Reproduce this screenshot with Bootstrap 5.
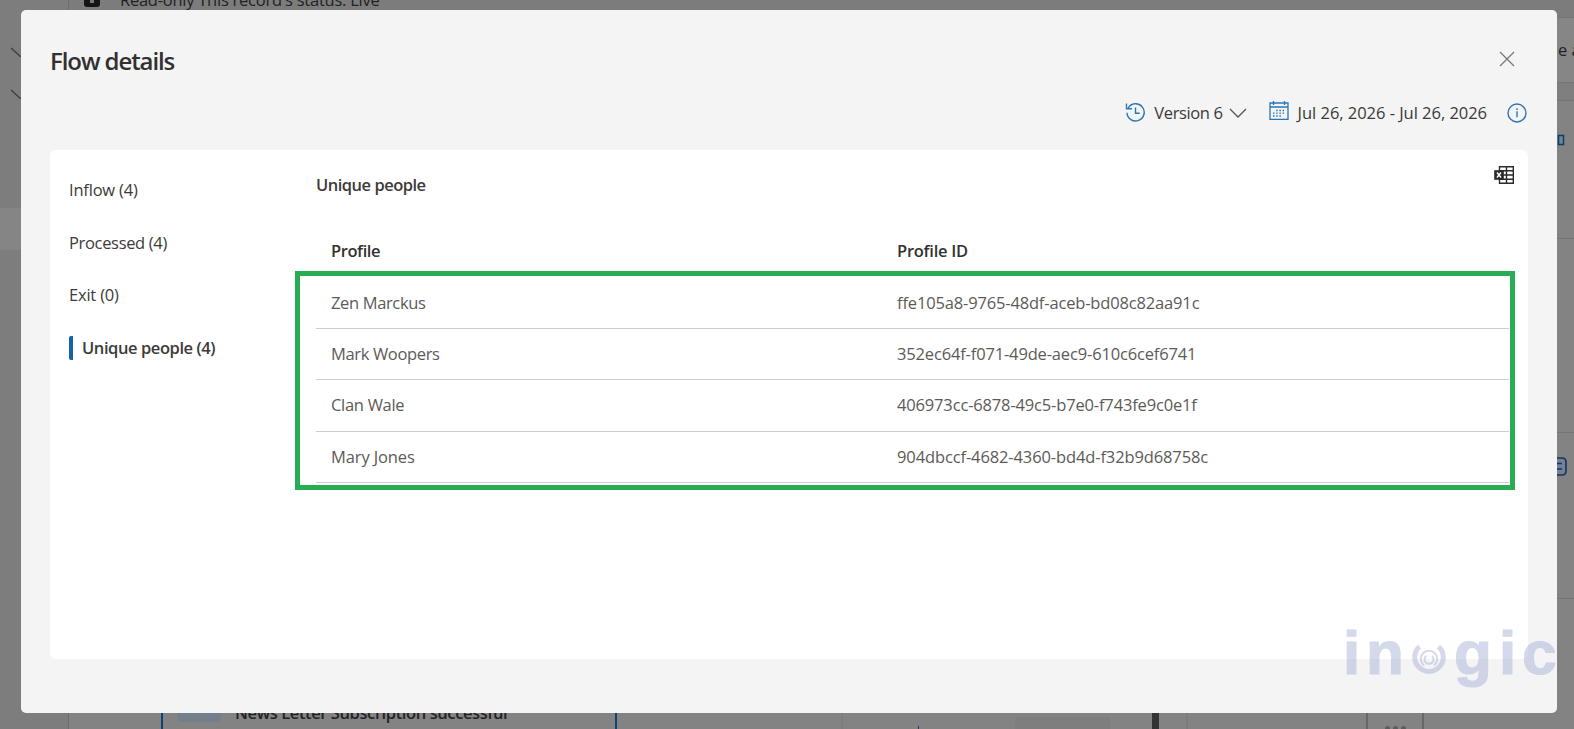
<!DOCTYPE html>
<html lang="en">
<head>
<meta charset="utf-8">
<meta name="viewport" content="width=device-width, initial-scale=1">
<title>Flow details</title>
<link href="https://cdn.jsdelivr.net/npm/bootstrap@5.3.0/dist/css/bootstrap.min.css" rel="stylesheet">
<style>
  body { font-family: "Open Sans", "Noto Sans", sans-serif; font-size: 16.5px; line-height: 24px; color: #3b3a39; background: #838383; height: 729px; }
  svg { display: block; flex: none; }

  /* dimmed page behind the dialog */
  .page-behind { height: 729px; color: #222; white-space: nowrap; }
  .rail { width: 69px; background: #7d7d7d; border-right: 1px solid #6e6e6e; padding-top: 47px; }
  .rail svg { margin: 0 0 32px 10px; }
  .rail-active { height: 42px; background: #858585; margin-top: 109px; }
  .notice { height: 17px; background: #7c7c7c; padding-left: 15px; }
  .notice-text { line-height: 24px; margin-top: -12px; margin-left: 20px; letter-spacing: -.25px; }
  .lock { width: 16px; height: 7px; background: #151515; border-radius: 0 0 3px 3px; }
  .lock i { display: block; width: 4px; height: 3px; background: #777; margin: 0 auto; }
  .canvas-strip { height: 16px; }
  .tile { width: 456px; margin-left: 92px; border: solid #0d4370; border-width: 0 2px; padding-left: 15px; }
  .thumb { width: 43px; height: 9px; background: #73808b; border-radius: 0 0 4px 4px; }
  .tile-text { font-weight: 600; letter-spacing: -.4px; margin: -12px 0 0 14px; }
  .vline { width: 2px; background: #7c7c7c; }
  .tick { width: 1px; height: 3px; background: #2c3b48; align-self: flex-end; }
  .block-a { width: 95px; height: 12px; background: #7e7e7e; align-self: flex-end; }
  .bar-dark { width: 7px; background: #333; }
  .more-box { width: 58px; border: solid #686868; border-width: 0 2px; gap: 3px; }
  .more-box i { width: 5px; height: 3px; border-radius: 3px 3px 0 0; background: #5c5c5c; }
  .edge { width: 17px; }
  .edge > div { border-bottom: 1px solid #757575; overflow: hidden; }

  /* dialog */
  .flow-dialog { left: 21px; top: 10px; width: 1536px; height: 703px; background: #f4f4f4; border-radius: 5px; padding: 35px 29px 0; }
  .head { height: 56px; padding-right: 13px; }
  .flow-title { font-size: 24px; line-height: 32px; font-weight: 600; letter-spacing: -1.08px; color: #323130; margin: 0; }
  .tools { height: 49px; padding-right: 1px; }
  .sheet { height: 509px; border-radius: 6px; padding: 0 14px 0 19px; }
  .steps { width: 247px; flex: none; padding-top: 28px; }
  .steps a { color: inherit; text-decoration: none; height: 24px; margin-bottom: 28.6px; display: flex; letter-spacing: -.2px; }
  .steps .on { border-left: 4px solid #1464a5; border-radius: 2px; padding-left: 9px; font-weight: 600; letter-spacing: -.42px; }
  .pane { padding-top: 16px; min-width: 0; }
  .pane-title { font-size: 16.5px; line-height: 24px; font-weight: 600; letter-spacing: -.5px; margin: 7px 0 0; }
  .prow { height: 51.2px; padding-left: 15px; border-bottom: 1px solid #cdcdcd; color: #5c5a58; }
  .prow > :first-child { width: 566px; }
  .phead { border: 0; color: #323130; font-weight: 600; height: 51px; margin-top: 28px; }
  .frame { border: 5px solid #28ae52; margin: -5px 0 0 -21px; width: 1220px; padding: 2px 5px 2px 16px; height: 219px; }
  .frame .prow { width: 1193px; }

  /* watermark */
  .wm { left: 1345px; top: 608px; height: 90px; color: #adb7d9; opacity: .52; font: 700 62px/90px "Liberation Sans", Arial, sans-serif; -webkit-text-stroke: 1.2px #adb7d9; pointer-events: none; }
  .wm span { display: block; position: absolute; top: 0; }
</style>
</head>
<body class="overflow-hidden position-relative">

<div class="page-behind d-flex">
  <div class="rail">
    <svg width="16" height="10" fill="none" stroke="#3c3c3c" stroke-width="1.3"><path d="M1 1l10 9"/></svg>
    <svg width="16" height="10" fill="none" stroke="#3c3c3c" stroke-width="1.3"><path d="M1 1l10 9"/></svg>
    <div class="rail-active"></div>
  </div>
  <div class="flex-grow-1 d-flex flex-column justify-content-between">
    <div class="notice d-flex"><div class="lock"><i></i></div><div class="notice-text">Read-only This record's status: Live</div></div>
    <div class="canvas-strip d-flex">
      <div class="tile d-flex"><div class="thumb"></div><div class="tile-text">News Letter Subscription successful</div></div>
      <div class="vline" style="margin-left:224px"></div>
      <div class="tick" style="margin-left:75px"></div>
      <div class="block-a" style="margin-left:96px"></div>
      <div class="bar-dark" style="margin-left:42px"></div>
      <div class="vline" style="margin-left:27px"></div>
      <div class="more-box d-flex align-items-end justify-content-center" style="margin-left:178px"><i></i><i></i><i></i></div>
    </div>
  </div>
  <div class="edge">
    <div style="height:18px;background:#7c7c7c"></div>
    <div style="height:65px;background:#868686"><div style="margin:20px 0 0 1px">e a</div></div>
    <div style="height:18px;background:#7f7f7f"></div>
    <div style="height:138px"><svg width="9" height="46" fill="#6f8696" stroke="#0f3f66" stroke-width="1.5"><path d="M1.500 34.500H6.500v9H1.500z"/></svg></div>
    <div style="height:194px"></div>
    <div style="height:166px"><svg width="12" height="46" fill="#71819b" stroke="#1b3359" stroke-width="1.6"><path d="M-3 25H5q4 0 4 4v9q0 4-4 4H-3M0 30.5h5M0 36h5"/></svg></div>
  </div>
</div>

<main class="flow-dialog position-absolute">
  <div class="head d-flex justify-content-between">
    <h1 class="flow-title">Flow details</h1>
    <svg width="16" height="16" style="margin-top:6px" fill="none" stroke="#777" stroke-width="1.3"><path d="M1 1l14 14M15 1L1 15"/></svg>
  </div>
  <div class="tools d-flex align-items-start">
    <svg class="ms-auto" width="21" height="21" style="margin-top:1px" fill="none" stroke="#2b76b9" stroke-width="1.4"><path d="M3.200 6A8.600 8.600 0 1 1 2 10.700M1.500 1.500v5.300h5.500M10.500 5.500v5.700h4.200"/></svg>
    <span style="letter-spacing:-.37px;margin-left:8px">Version 6</span>
    <svg width="18" height="24" style="margin-left:6px" fill="none" stroke="#555" stroke-width="1.3"><path d="M1 8l8 8 8-8"/></svg>
    <svg width="20" height="20" style="margin:0 0 0 22px" fill="none" stroke="#2b76b9" stroke-width="1.3"><path d="M1 2h18v16.300H1zM1 6h18M4.500 0v4M15.500 0v4"/><path stroke-dasharray="1.500 1.700" d="M7.200 9.500h9.500M4 12.200h12.700M4 15h9.500"/></svg>
    <span style="margin-left:9px;letter-spacing:-.03px">Jul 26, 2026 - Jul 26, 2026</span>
    <svg width="20" height="20" style="margin:2px 0 0 20px" fill="none" stroke="#2b76b9" stroke-width="1.4"><circle cx="10" cy="10" r="9"/><path d="M10 8.300v6M10 5.300v1.600"/></svg>
  </div>

  <section class="sheet bg-white d-flex">
    <nav class="steps">
      <a href="#">Inflow (4)</a>
      <a href="#" style="letter-spacing:-.33px">Processed (4)</a>
      <a href="#">Exit (0)</a>
      <a href="#" class="on">Unique people (4)</a>
    </nav>
    <div class="pane flex-grow-1">
      <div class="d-flex justify-content-between align-items-start">
        <h2 class="pane-title">Unique people</h2>
        <svg width="20" height="18" fill="none" stroke="#2b2a29" stroke-width="1.4"><path d="M5.500.7h13.800v16.600H5.500zM12.500.7v16.600M6 4.800h13M6 9h13M6 13.200h13"/><rect x=".2" y="4.200" width="9.600" height="9.600" fill="#2b2a29" stroke="none"/><path stroke="#fff" stroke-width="1.500" d="M3 6.500l4 5M7 6.500l-4 5"/></svg>
      </div>
      <div class="prow phead d-flex align-items-center"><div style="letter-spacing:-.42px">Profile</div><div style="letter-spacing:-.25px">Profile ID</div></div>
      <div class="frame">
        <div class="prow d-flex align-items-center"><div style="letter-spacing:-.36px">Zen Marckus</div><div style="letter-spacing:-.16px">ffe105a8-9765-48df-aceb-bd08c82aa91c</div></div>
        <div class="prow d-flex align-items-center"><div style="letter-spacing:-.35px">Mark Woopers</div><div style="letter-spacing:-.16px">352ec64f-f071-49de-aec9-610c6cef6741</div></div>
        <div class="prow d-flex align-items-center"><div style="letter-spacing:-.3px">Clan Wale</div><div style="letter-spacing:-.16px">406973cc-6878-49c5-b7e0-f743fe9c0e1f</div></div>
        <div class="prow d-flex align-items-center"><div style="letter-spacing:-.12px">Mary Jones</div><div style="letter-spacing:-.12px">904dbccf-4682-4360-bd4d-f32b9d68758c</div></div>
      </div>
    </div>
  </section>
</main>

<div class="wm position-absolute">
  <span style="left:-2px">i</span><span style="left:21px">n</span>
  <svg class="position-absolute" style="left:66px;top:33px" width="36" height="36" fill="none" stroke="currentColor"><path stroke-width="5" d="M8.500 5.500A14.300 14.300 0 1 0 27.500 5.500"/><path stroke-width="2" d="M13 24.500A8.200 8.200 0 1 1 23 24.500"/><path stroke-width="2" d="M15 15A4.500 4.500 0 1 0 21 15"/></svg>
  <span style="left:109px">g</span><span style="left:154px">i</span><span style="left:177px">c</span>
</div>

<script src="https://cdn.jsdelivr.net/npm/bootstrap@5.3.0/dist/js/bootstrap.bundle.min.js"></script>
</body>
</html>
